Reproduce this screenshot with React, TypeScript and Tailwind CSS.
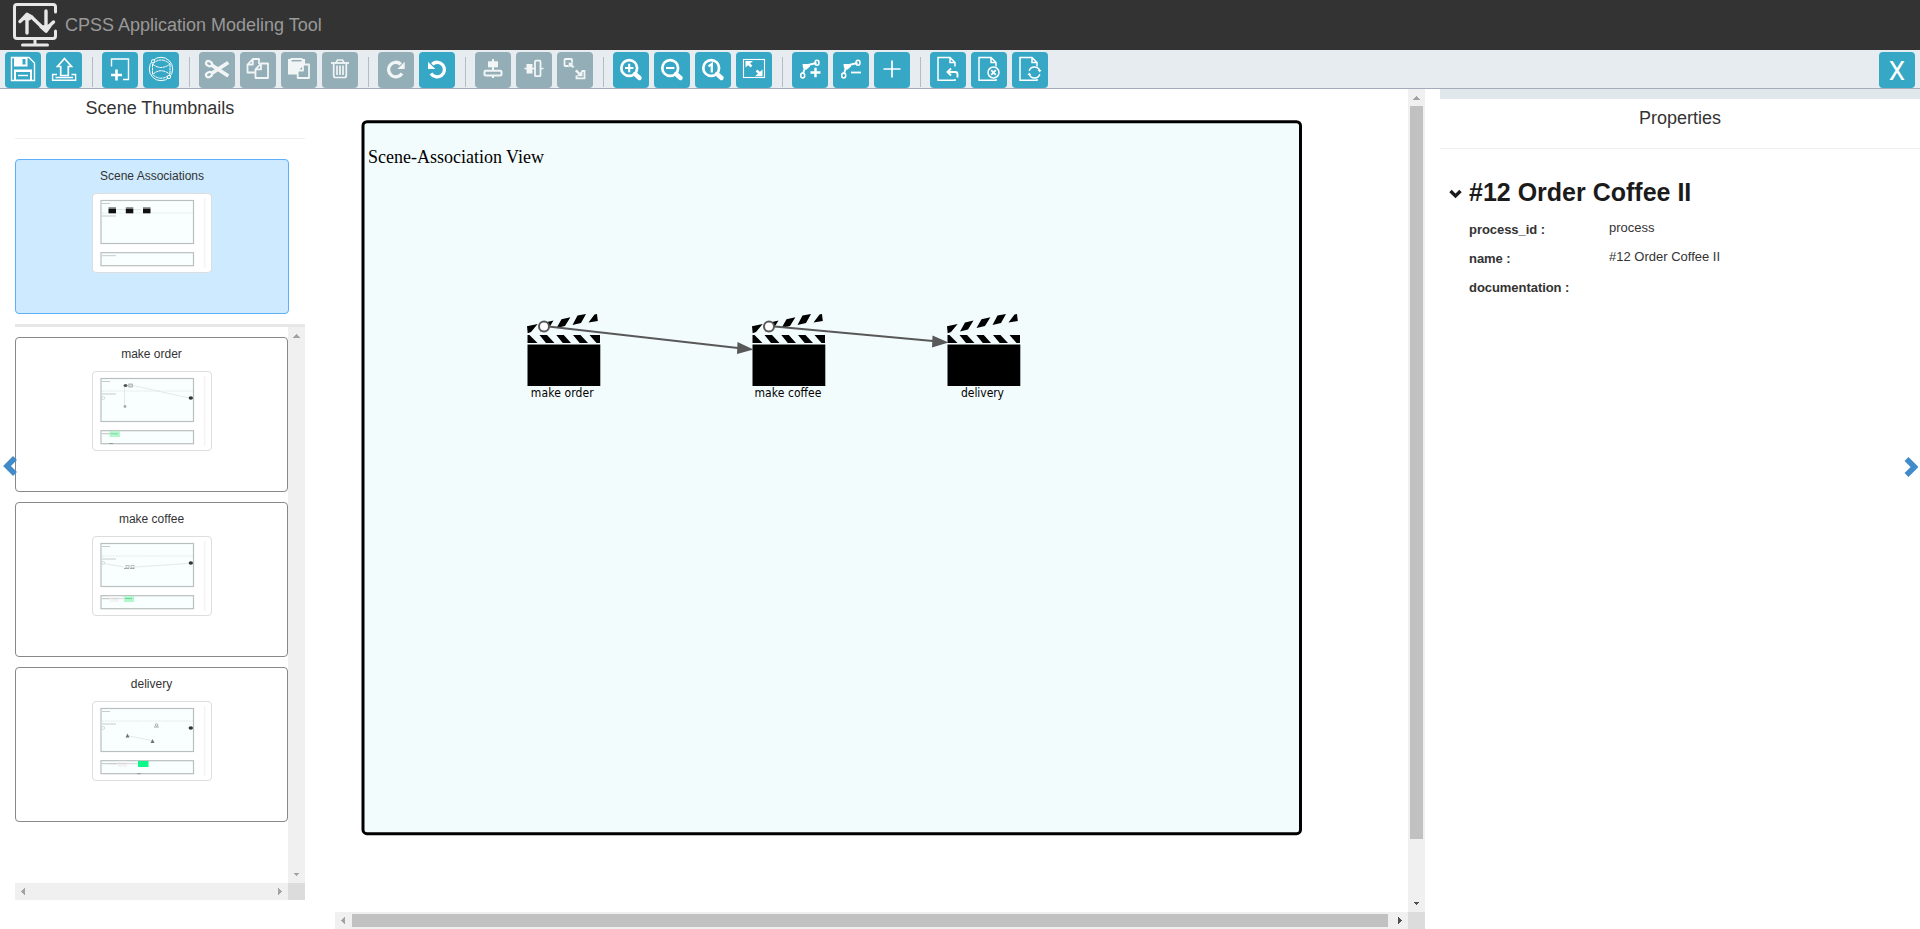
import type { ReactNode } from "react";

const teal = "bg-[#37a7c6]";
const muted = "bg-[#93aeb6]";

function Tool({ children, off }: { children: ReactNode; off?: boolean }) {
  return (
    <button className={`h-9 w-9 shrink-0 rounded ${off ? muted : teal}`}>
      <svg viewBox="0 0 36 36" className="block h-9 w-9" fill="none" stroke={off ? "#f1f5f6" : "#fff"} strokeWidth="1.5">
        {children}
      </svg>
    </button>
  );
}

function Group({ children }: { children: ReactNode }) {
  return <div className="flex gap-[5px]">{children}</div>;
}

function Separator() {
  return <div className="ml-[10px] mr-[9px] mt-[5px] h-[30px] w-px shrink-0 bg-[#b4bcc4]" />;
}

const SheetCorner = () => <path d="M25 14.5V10.500L20 5.500H8V28.300H25V27 M20 5.500V10.500H25" strokeWidth="1.5" />;

function Magnifier({ children }: { children?: ReactNode }) {
  return (
    <>
      <circle cx="16.2" cy="16" r="7.9" strokeWidth="2.7" />
      <path d="M22 22L26.500 26" strokeWidth="4.400" strokeLinecap="round" />
      {children}
    </>
  );
}

function Network() {
  return (
    <>
      <path d="M11 22L13.5 13.5L24.5 11" strokeWidth="1.8" />
      <path d="M10.500 12H18V14.500L14 18L11 16Z" fill="#fff" stroke="none" />
      <ellipse cx="25" cy="10.8" rx="2" ry="2.500" />
      <ellipse cx="10.7" cy="23.4" rx="2" ry="2.500" />
    </>
  );
}

function Toolbar() {
  return (
    <div className="flex h-[39px] items-start border-b border-[#a3acbb] bg-[#e7ecf0] pl-[5px] pr-[5px] pt-[2px]">
      <Group>
        <Tool>
          <path d="M6.5 5.500H24L29.5 11V28.500H6.5Z" strokeWidth="1.4" />
          <path d="M9 5H22.5V14.500H9Z M9 17.500H27V28.5H9Z" fill="#fff" stroke="none" />
          <path d="M17.500 7H20.500V12.5H17.500Z M11 20H25V27.5H11Z" fill="#37a7c6" stroke="none" />
          <path d="M13 23.5H23" strokeWidth="1.4" />
        </Tool>
        <Tool>
          <path d="M18.5 6.500L25.5 14.500H22.3V23.5H14.7V14.500H11.5Z" strokeWidth="1.7" />
          <path d="M11 22.5H6.6V28.3H29.6V22.5H25.5 M9.500 25.500H27" strokeWidth="1.4" />
        </Tool>
      </Group>
      <Separator />
      <Group>
        <Tool>
          <path d="M9.5 14.5V7H26.5V27.5H21" strokeWidth="1.4" />
          <path d="M9 23H20 M14.500 17.5V28.500" strokeWidth="2.6" />
        </Tool>
        <Tool>
          <g strokeWidth="1">
            <circle cx="18" cy="17" r="11.7" />
            <path d="M9.500 12Q18 4 27 12Q18 19 9.500 12Z M9.500 22.500Q18 15 27 22.500Q18 30 9.500 22.500Z M9.500 12V22.500M27 12V22.500" strokeDasharray="3 .5" />
            <circle cx="10" cy="9.3" r="1.6" fill="#37a7c6" />
            <circle cx="26" cy="25" r="1.6" fill="#37a7c6" />
          </g>
        </Tool>
      </Group>
      <Separator />
      <Group>
        <Tool off>
          <path d="M12.5 13L29.300 24M12.5 21.500L29.300 10.500" strokeWidth="3.8" />
          <ellipse cx="10" cy="11.6" rx="3.1" ry="2.4" strokeWidth="2.2" transform="rotate(25 10 11.6)" />
          <ellipse cx="10" cy="22.6" rx="3.1" ry="2.4" strokeWidth="2.2" transform="rotate(-25 10 22.6)" />
        </Tool>
        <Tool off>
          <g strokeWidth="1.8" strokeLinejoin="round">
            <path d="M15.5 20.5H7.500V12.5L12.8 7H19V12 M12.8 7V12.5H7.500" />
            <path d="M15.5 17.3L21 11.5H28V26H15.5Z M21 11.5V17.3H15.5" />
          </g>
        </Tool>
        <Tool off>
          <path d="M7 7H9.5V6H21.5V7H24V12L17 18V22.5H7Z" fill="#f1f5f6" stroke="none" />
          <path d="M10.500 8.7H20.500" stroke="#93aeb6" strokeWidth="1.5" />
          <path d="M16.7 18.5L22 12.5H28V26H16.7Z M22 12.5V18.5H16.7" fill="#93aeb6" strokeWidth="1.8" strokeLinejoin="round" />
        </Tool>
        <Tool off>
          <path d="M9 11H27" strokeWidth="1.8" />
          <path d="M14 10.500L15.5 8H20.5L22 10.500" strokeWidth="1.5" />
          <path d="M11.7 11V23.5Q11.7 25.5 13.5 25.5H22.5Q24.3 25.5 24.3 23.5V11 M15 13.5V23M18 13.5V23M21 13.5V23" strokeWidth="1.7" />
        </Tool>
      </Group>
      <Separator />
      <Group>
        <Tool off>
          <path d="M22.8 12.2A7.3 7.3 0 1 0 24 21.5" strokeWidth="3.3" />
          <path d="M26.7 9.7V17H19.4Z" fill="#f1f5f6" stroke="none" />
        </Tool>
        <Tool>
          <path d="M13.2 12.2A7.3 7.3 0 1 1 12 21.5" strokeWidth="3.3" />
          <path d="M9 9.7V17H16.3Z" fill="#fff" stroke="none" />
        </Tool>
      </Group>
      <Separator />
      <Group>
        <Tool off>
          <path d="M18 7V26" strokeWidth="2" />
          <rect x="13" y="9.3" width="10" height="6" fill="#f1f5f6" stroke="none" />
          <rect x="9.5" y="18.8" width="17" height="4.6" rx="1" fill="#93aeb6" strokeWidth="2" />
        </Tool>
        <Tool off>
          <path d="M8.5 16.5H27.500" strokeWidth="1.5" />
          <rect x="10.5" y="12" width="6" height="9.500" fill="#f1f5f6" stroke="none" />
          <rect x="19" y="8.7" width="5.500" height="15.5" rx="1" fill="#93aeb6" strokeWidth="1.8" />
        </Tool>
        <Tool off>
          <rect x="7.5" y="7" width="7.5" height="7" rx=".8" strokeWidth="1.8" />
          <path d="M19.5 23.5V26.3H27.5V19H24.5" strokeWidth="1.8" />
          <path d="M11.5 10.500H16.500L15 12.3L17.500 14.7L15.9 16.3L13.2 13.9L11.5 15.9Z" fill="#f1f5f6" stroke="#93aeb6" strokeWidth=".4" />
          <path d="M25.500 24.300H19.500L21.5 22.5L18 19.3L19.7 17.500L22.9 20.8L25.500 18.500Z" fill="#f1f5f6" stroke="none" />
        </Tool>
      </Group>
      <Separator />
      <Group>
        <Tool>
          <Magnifier><path d="M12 16H20.4M16.2 11.8V20.2" strokeWidth="2.1" /></Magnifier>
        </Tool>
        <Tool>
          <Magnifier><path d="M12 16H20.4" strokeWidth="2.1" /></Magnifier>
        </Tool>
        <Tool>
          <Magnifier><path d="M13.5 14.4L16.8 12V20.5" strokeWidth="2.3" /></Magnifier>
        </Tool>
        <Tool>
          <rect x="7.5" y="7.5" width="21" height="18" strokeWidth="1.1" />
          <path d="M11 10.500L15.500 14.500M20.500 18.500L25 22.5" strokeWidth="2.4" />
          <path d="M9.5 9H17L9.5 15.500Z M26.5 24.2H19L26.5 17.500Z" fill="#fff" stroke="none" />
        </Tool>
      </Group>
      <Separator />
      <Group>
        <Tool>
          <Network />
          <path d="M18.5 20.5H28.5M23.5 15.7V25.3" strokeWidth="2.4" />
        </Tool>
        <Tool>
          <Network />
          <path d="M18 20.5H28" strokeWidth="1.8" />
        </Tool>
        <Tool>
          <path d="M9.5 17H26.5M18 8.5V25.5" strokeWidth="1.7" />
        </Tool>
      </Group>
      <Separator />
      <Group>
        <Tool>
          <SheetCorner />
          <path d="M17.500 20H25.500Q27.500 20 27.500 22.5V25.500M21 16.500L17.500 20L21 23.500" strokeWidth="1.9" />
        </Tool>
        <Tool>
          <SheetCorner />
          <circle cx="22.5" cy="20.5" r="5.5" fill="#37a7c6" strokeWidth="1.5" />
          <path d="M20.200 18.200L24.800 22.800M24.800 18.200L20.200 22.800" strokeWidth="1.8" />
        </Tool>
        <Tool>
          <SheetCorner />
          <circle cx="22.5" cy="20.5" r="6.5" fill="#37a7c6" stroke="none" />
          <path d="M17.2 18.7A5.6 5.6 0 0 1 27.7 18.5M27.8 22.3A5.6 5.6 0 0 1 17.3 22.5" strokeWidth="1.6" />
          <path d="M25.700 18H29.500L27.7 20.5Z M15.500 23H19.300L17.2 20.5Z" fill="#fff" stroke="none" />
        </Tool>
      </Group>
      <button className="ml-auto h-9 w-9 rounded bg-[#37a7c6] pt-[3px] font-[Roboto,sans-serif] text-[26px] leading-[33px] text-white">X</button>
    </div>
  );
}

function Arrow({ dir, dark }: { dir: "up" | "down" | "left" | "right"; dark?: boolean }) {
  const d = {
    up: "M5 10.500L8.5 7L12 10.500Z",
    down: "M5 6.500L8.5 10L12 6.500Z",
    left: "M10 5L6 8.5L10 12Z",
    right: "M7 5L11 8.5L7 12Z",
  }[dir];
  return (
    <svg viewBox="0 0 17 17" className="block h-[17px] w-[17px] shrink-0" shapeRendering="crispEdges">
      <path d={d} fill={dark ? "#505050" : "#a3a3a3"} />
    </svg>
  );
}

function Clapper() {
  return (
    <>
      <path d="M0 12.3L10.700 10L4 18L.7 19.300Z M18 8.500L26.500 6.500L21 15.5L13 17.500Z M34.500 5.300L43.400 3.200L38 12L29.500 14Z M50.500 1.500L59 0L54 9L45.500 11Z M67.500 .500L70 0L70.800 7L61.500 8.500Z" />
      <path d="M.5 21H2.500L10.500 29H.5Z M12.5 21H20L27.500 29H19Z M29.300 21H36.8L44 29H35.8Z M46 21H53.500L61 29H52.700Z M62.500 21H73V29H69.500Z" />
      <path d="M.5 30.5H73.300V72H.5Z" />
    </>
  );
}

type Sketch = "scenes" | "order" | "coffee" | "delivery";

function Preview({ kind }: { kind: Sketch }) {
  return (
    <svg viewBox="0 0 118 78" className="block h-[78px] w-[118px]" fill="none">
      <path d="M111.7 4V74" stroke="#f4f4f4" strokeWidth="1.6" />
      <rect x="8" y="6.5" width="92.5" height="43" fill="#f9ffff" stroke="#b9bfbf" strokeWidth="1.2" />
      <rect x="8" y="58.7" width="92.5" height="13" fill="#f9ffff" stroke="#b9bfbf" strokeWidth="1.2" />
      <path d="M9 19H100" stroke="#dfe5e5" strokeWidth=".8" strokeDasharray="2 .8" />
      <path d="M9 9.5H17M9 22H23" stroke="#c6cccc" strokeWidth="1" />
      {kind === "scenes" && (
        <>
          <path d="M9 61.7H23" stroke="#c6cccc" />
          <path d="M23 15.7H48" stroke="#dce3e3" />
          {[15.5, 32.8, 50].map((x) => (
            <g key={x}>
              <path d={`M${x} 14H${x + 7.5}`} stroke="#777" strokeWidth="1.5" />
              <rect x={x} y="14.8" width="7.500" height="4.5" fill="#111" />
            </g>
          ))}
        </>
      )}
      {kind !== "scenes" && (
        <>
          <circle cx="10.2" cy="26" r="1.5" stroke="#c5caca" strokeWidth=".7" />
          <ellipse cx="97.8" cy="26" rx="2.2" ry="1.7" fill="#333" />
          <path d="M9 61.7H24" stroke="#c0c0c0" />
        </>
      )}
      {kind === "order" && (
        <>
          <path d="M40 13.5L96 26M31.5 15V34" stroke="#dce3e3" strokeWidth=".8" />
          <ellipse cx="32.5" cy="13.5" rx="2" ry="1.5" fill="#555" />
          <rect x="35.8" y="12" width="3.5" height="3" fill="#ddd" stroke="#999" strokeWidth=".7" />
          <circle cx="32" cy="34.5" r="1.4" fill="#aaa" />
          <rect x="16.5" y="59" width="10.500" height="6" fill="#b5f6cd" />
          <path d="M17.5 61.8H25" stroke="#7ad6a0" />
          <path d="M16 71.5H20" stroke="#999" />
        </>
      )}
      {kind === "coffee" && (
        <>
          <path d="M11 26.5L31 30M42 30L95 26.5" stroke="#dce3e3" strokeWidth=".8" />
          <path d="M31 31.5H36M37 31.5H41.500" stroke="#aaa" strokeWidth="1.2" />
          <rect x="33" y="28.5" width="3" height="2.5" stroke="#aaa" strokeWidth=".7" />
          <rect x="38" y="28.5" width="3" height="2.5" stroke="#aaa" strokeWidth=".7" />
          <rect x="17" y="59" width="9" height="6" fill="#f3f3f3" />
          <path d="M18 61.7H31" stroke="#ccc" strokeWidth=".8" />
          <rect x="31" y="59" width="10" height="6" fill="#b0f8cc" />
          <path d="M32 61.5H39" stroke="#75ce99" />
        </>
      )}
      {kind === "delivery" && (
        <>
          <path d="M36 34L59 38.5" stroke="#dce3e3" strokeWidth=".8" />
          <path d="M32.5 35.5L34.5 31.5L36.5 35.5Z M57.5 41L59.5 37L61.5 41Z" fill="#707070" />
          <path d="M61 25H66" stroke="#aaa" /><circle cx="63.5" cy="23" r="1.3" stroke="#999" strokeWidth=".8" />
          <rect x="25" y="59" width="9" height="6" fill="#f3f3f3" />
          <path d="M17 61.7H45" stroke="#ccc" strokeWidth=".8" />
          <rect x="45" y="59" width="10.5" height="6" fill="#0df78b" />
          <path d="M44 71.7H48" stroke="#999" />
        </>
      )}
    </svg>
  );
}

function SceneCard({ name, kind, selected }: { name: string; kind: Sketch; selected?: boolean }) {
  return (
    <div
      className={`flex h-[155px] shrink-0 flex-col items-center rounded border pt-2 ${
        selected ? "w-[274px] border-[#5cb0fb] bg-[#cdeafe]" : "w-[273px] border-[#888] bg-white"
      }`}
    >
      <div className="h-[25px] text-xs leading-[17px] text-[#333]">{name}</div>
      <div className="h-20 w-[120px] rounded border border-[#ddd] bg-white">
        <Preview kind={kind} />
      </div>
    </div>
  );
}

function ThumbnailPanel() {
  return (
    <aside className="flex w-[335px] shrink-0 flex-col pl-[15px]">
      <h2 className="w-[290px] pt-[9px] text-center text-lg leading-5 text-[#333]">Scene Thumbnails</h2>
      <div className="mt-5 h-px w-[290px] bg-[#eee]" />
      <div className="mt-5">
        <SceneCard name="Scene Associations" kind="scenes" selected />
      </div>
      <div className="mt-[10px] h-[3px] w-[290px] bg-[#e7e7e7]" />
      <div className="flex h-[556px] w-[290px]">
        <div className="flex w-[273px] flex-col gap-[10px] pt-[10px]">
          <SceneCard name="make order" kind="order" />
          <SceneCard name="make coffee" kind="coffee" />
          <SceneCard name="delivery" kind="delivery" />
        </div>
        <div className="flex w-[17px] flex-col justify-between bg-[#f0f0f0]">
          <Arrow dir="up" />
          <Arrow dir="down" />
        </div>
      </div>
      <div className="flex h-[17px] w-[290px]">
        <div className="flex w-[273px] justify-between bg-[#f0f0f0]">
          <Arrow dir="left" />
          <Arrow dir="right" />
        </div>
        <div className="w-[17px] bg-[#dcdcdc]" />
      </div>
    </aside>
  );
}

function Canvas() {
  return (
    <main className="flex w-[1090px] shrink-0 flex-col">
      <div className="flex h-[823px]">
        <div className="w-[1073px]">
          <svg viewBox="335 89 1073 823" className="block h-[823px] w-[1073px]">
            <rect x="363" y="121.7" width="937.5" height="712" rx="4" fill="#f3fcfd" stroke="#000" strokeWidth="3" />
            <text x="368" y="163" fontSize="18" textLength="176" fontFamily="Liberation Serif, serif">Scene-Association View</text>
            <g transform="translate(527 314)"><Clapper /></g>
            <g transform="translate(752 314)"><Clapper /></g>
            <g transform="translate(947 314)"><Clapper /></g>
            <g stroke="#585858" strokeWidth="2" fill="#fff">
              <path d="M544 326L738 348M769 326L933 341" />
              <circle cx="544" cy="326.5" r="5" />
              <circle cx="769" cy="326.5" r="5" />
            </g>
            <path d="M737.5 342L753.5 349.5L737 354Z M932.5 335.5L948.5 342.5L932 347.5Z" fill="#585858" />
            <g fontSize="12" fontFamily="DejaVu Sans Condensed, DejaVu Sans, sans-serif" textAnchor="middle">
              <text x="562.3" y="397" textLength="63">make order</text>
              <text x="788" y="397" textLength="67">make coffee</text>
              <text x="982.5" y="397" textLength="43">delivery</text>
            </g>
          </svg>
        </div>
        <div className="flex w-[17px] flex-col items-center bg-[#f0f0f0]">
          <Arrow dir="up" />
          <div className="h-[733px] w-[13px] bg-[#c1c1c1]" />
          <div className="mt-auto"><Arrow dir="down" dark /></div>
        </div>
      </div>
      <div className="flex h-[17px]">
        <div className="flex w-[1073px] items-center bg-[#f0f0f0]">
          <Arrow dir="left" />
          <div className="h-[13px] w-[1036px] bg-[#c1c1c1]" />
          <div className="ml-auto"><Arrow dir="right" dark /></div>
        </div>
        <div className="w-[17px] bg-[#dcdcdc]" />
      </div>
    </main>
  );
}

function Property({ label, value }: { label: string; value?: string }) {
  return (
    <div className="flex h-[29px] text-[13px] leading-5 text-[#333]">
      <div className="w-[140px] pt-[2px] font-bold tracking-[-0.05px]">{label} :</div>
      <div>{value}</div>
    </div>
  );
}

function PropertiesPanel() {
  return (
    <aside className="ml-[15px] w-[480px] shrink-0">
      <div className="h-[10px] bg-[#e0e8ec]" />
      <h2 className="pt-[9px] text-center text-lg leading-5 text-[#333]">Properties</h2>
      <div className="mt-5 h-px bg-[#eee]" />
      <div className="flex items-center pl-[9px] pt-[27px]">
        <svg viewBox="0 0 13 10" className="mt-1 h-[10px] w-[13px]">
          <path d="M1.5 2L6.5 7L11.5 2" fill="none" stroke="#1b1b1b" strokeWidth="3.3" />
        </svg>
        <h1 className="pl-[7px] text-[25px] font-bold leading-8 text-[#1b1b1b]">#12 Order Coffee II</h1>
      </div>
      <div className="pl-[29px] pt-[10px]">
        <Property label="process_id" value="process" />
        <Property label="name" value="#12 Order Coffee II" />
        <Property label="documentation" />
      </div>
    </aside>
  );
}

export default function App() {
  return (
    <div className="relative flex h-[929px] w-[1920px] flex-col overflow-hidden bg-white font-['Liberation_Sans',sans-serif]">
      <header className="flex h-[50px] shrink-0 items-center bg-[#333] pl-[13px]">
        <svg viewBox="0 0 44 44" className="h-11 w-11" fill="none" stroke="#e7e7e7" strokeWidth="3" strokeLinecap="round" strokeLinejoin="round">
          <path d="M42.500 9V4Q42.5 1.5 40 1.5H4Q1.5 1.5 1.5 4V33Q1.5 35.5 4 35.5H40Q42.5 35.5 42.5 33V28" />
          <path d="M22 36V41M9.500 42H34.5" />
          <path d="M14 30V13M7 18.500L14 12L18 13.5L29 24L33 26L40.500 19M33 8V25" strokeWidth="3.4" />
          <path d="M10 15.500L14 11L19 14L16 16Z M28 24L33 28.500L37 23Z" fill="#e7e7e7" />
        </svg>
        <span className="pl-2 text-lg text-[#999]">CPSS Application Modeling Tool</span>
      </header>
      <Toolbar />
      <div className="flex min-h-0 flex-1">
        <ThumbnailPanel />
        <Canvas />
        <PropertiesPanel />
      </div>
      <svg viewBox="0 0 14 20" className="absolute left-[3px] top-[456px] h-5 w-[14px]">
        <path d="M12 2L4 10L12 18" fill="none" stroke="#428bca" strokeWidth="5.500" />
      </svg>
      <svg viewBox="0 0 14 20" className="absolute left-[1904px] top-[457px] h-5 w-[14px]">
        <path d="M2.500 2L10.500 10L2.500 18" fill="none" stroke="#428bca" strokeWidth="5.500" />
      </svg>
    </div>
  );
}
